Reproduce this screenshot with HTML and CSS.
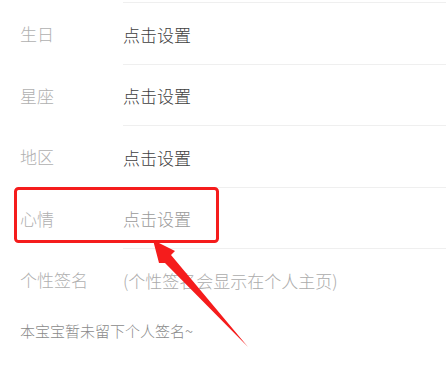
FILE: index.html
```html
<!DOCTYPE html>
<html lang="zh-CN">
<head>
<meta charset="utf-8">
<title>资料</title>
<link rel="stylesheet" href="styles.css">
</head>
<body>
<div class="page">
  <div class="list">
    <div class="row">
      <div class="label">生日</div>
      <div class="value">点击设置</div>
    </div>
    <div class="row">
      <div class="label">星座</div>
      <div class="value">点击设置</div>
    </div>
    <div class="row">
      <div class="label">地区</div>
      <div class="value">点击设置</div>
    </div>
    <div class="row">
      <div class="label">心情</div>
      <div class="value value-muted">点击设置</div>
    </div>
    <div class="row row-last">
      <div class="label">个性签名</div>
      <div class="value value-placeholder">(个性签名会显示在个人主页)</div>
    </div>
  </div>
  <div class="signature">本宝宝暂未留下个人签名~</div>

  <svg class="annotation" width="446" height="384" viewBox="0 0 446 384" aria-hidden="true">
    <rect x="15.5" y="188.5" width="202" height="53" rx="3" ry="3" fill="none" stroke="#f51c1c" stroke-width="3"/>
    <polygon points="153,240 175,251 171,255 248,347 165,263 159,263" fill="#f51c1c"/>
  </svg>
</div>
</body>
</html>
```

FILE: styles.css
```css
html, body {
  margin: 0;
  padding: 0;
  background: #ffffff;
}

body {
  font-family: "Noto Sans CJK SC", "Noto Sans", sans-serif;
}

.page {
  position: relative;
  width: 446px;
  height: 384px;
  overflow: hidden;
  padding-top: 2px;
  box-sizing: border-box;
}

.list {
  display: flex;
  flex-direction: column;
}

.row {
  display: flex;
  height: 61.5px;
  padding-left: 20px;
}

.label {
  width: 103px;
  flex: none;
  display: flex;
  align-items: center;
  padding-top: 3px;
  font-size: 17px;
  font-weight: 300;
  color: #b0b0b0;
  line-height: 24px;
}

.value {
  flex: 1;
  display: flex;
  align-items: center;
  padding-top: 3px;
  border-top: 1px solid #efefef;
  font-size: 17px;
  font-weight: 300;
  color: #404040;
  line-height: 24px;
}

.value-muted {
  color: #9a9a9a;
}

.value-placeholder {
  color: #ababab;
}

.signature {
  margin-top: 10px;
  padding-left: 20px;
  font-size: 15px;
  font-weight: 300;
  line-height: 22px;
  color: #8a8a8a;
}

.annotation {
  position: absolute;
  left: 0;
  top: 0;
}
```
